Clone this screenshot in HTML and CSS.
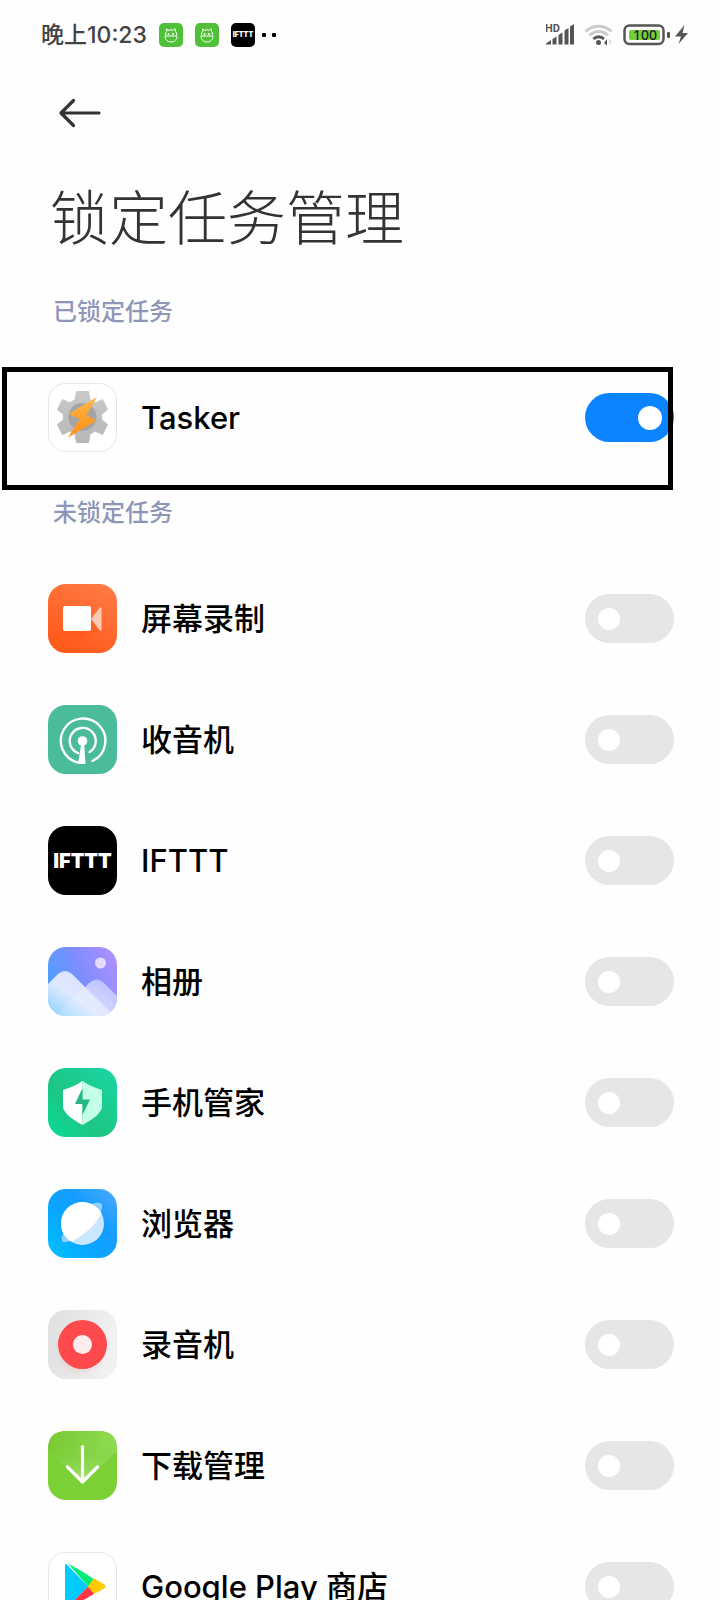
FILE: index.html
```html
<!DOCTYPE html>
<html lang="zh-CN">
<head>
<meta charset="utf-8">
<meta name="viewport" content="width=device-width, initial-scale=1">
<title>锁定任务管理</title>
<link rel="stylesheet" href="styles.css">
</head>
<body>
<div class="screen">
  <div class="status">
    <span class="clock">晚上10:23</span>
    <div class="notices">
      <svg class="notice" viewBox="0 0 24 24" aria-hidden="true"><rect width="24" height="24" rx="5" fill="#50c038"/><g fill="none" stroke="#fff" stroke-width="1"><path d="M7.500 8.500Q6 10 6.500 12M16.500 8.500Q18 10 17.500 12M8 8.500 7.500 6l2.500 1.500L12 6.500l2 1L16 5.500l.5 3M6 13h12c0 8-12 8-12 0z"/></g><circle cx="9.500" cy="11" r="1" fill="#fff"/><circle cx="14" cy="11" r="1" fill="#fff"/></svg>
      <svg class="notice" viewBox="0 0 24 24" aria-hidden="true"><rect width="24" height="24" rx="5" fill="#50c038"/><g fill="none" stroke="#fff" stroke-width="1"><path d="M7.500 8.500Q6 10 6.500 12M16.500 8.500Q18 10 17.500 12M8 8.500 7.500 6l2.500 1.500L12 6.500l2 1L16 5.500l.5 3M6 13h12c0 8-12 8-12 0z"/></g><circle cx="9.500" cy="11" r="1" fill="#fff"/><circle cx="14" cy="11" r="1" fill="#fff"/></svg>
      <span class="notice notice-ifttt">IFTTT</span>
    </div>
    <span class="more"><i></i><i></i></span>
    <div class="indicators">
      <svg width="30" height="24" viewBox="0 0 30 24" aria-hidden="true"><text class="hd" x="-1" y="9">HD</text><g fill="#555"><path d="M0 21.500v-1L5 17v4.500zM6.500 16l4-2.500v8H6.500zM12.500 12l4-2.500v12h-4zM18.500 7.500l4-2.500v16.500h-4zM24 3.500l4-2.500v20.500h-4z"/></g></svg>
      <svg width="30" height="24" viewBox="0 0 30 24" aria-hidden="true"><g fill="none" stroke-width="3"><path stroke="#ccc" d="M1.500 8.500a18.500 18.500 0 0 1 26 0M5.500 12.500a12.500 12.500 0 0 1 18.500 0"/><path stroke="#555" d="M9.500 16a7.500 7.500 0 0 1 10.500 0"/></g><circle cx="14.500" cy="19.500" r="2.500" fill="#555"/><path d="M20 20l3-4v6.500z" fill="#555"/><path d="M25 16v6l3-3.500z" fill="#ddd"/></svg>
      <div class="power">
        <svg width="48" height="24" viewBox="0 0 48 24" aria-hidden="true"><rect x="2.500" y="2.500" width="39" height="18.500" rx="5" fill="#fff" stroke="#555" stroke-width="2.500"/><rect x="7" y="7" width="31" height="10" rx="2" fill="#75d13b"/><rect x="45" y="9" width="3" height="6" rx="1" fill="#555"/><text class="charge" x="23" y="17" text-anchor="middle">100</text></svg>
        <svg width="16" height="24" viewBox="0 0 16 24" aria-hidden="true"><path d="M10.500 2 1 13.500h6L4.500 21 14 10H8.500z" fill="#555"/></svg>
      </div>
    </div>
  </div>
  <header class="head">
    <button class="back" type="button" aria-label="返回"><svg width="44" height="32" viewBox="0 0 44 32" fill="none" stroke="#333" stroke-width="3.200" stroke-linecap="round" stroke-linejoin="round"><path d="M41 16H4M15.500 3.500 3 16l12.500 12.500"/></svg></button>
    <h1 class="title">锁定任务管理</h1>
  </header>
  <main>
    <section>
      <h2 class="group">已锁定任务</h2>
      <label class="row row-marked">
        <svg class="icon" viewBox="0 0 69 69" aria-hidden="true"><defs><linearGradient id="tg" x2="0" y2="1"><stop stop-color="#c9c9c9"/><stop offset="1" stop-color="#b7b7b7"/></linearGradient><linearGradient id="tb" x2="0" y2="1"><stop stop-color="#ffb84d"/><stop offset="1" stop-color="#ff8c10"/></linearGradient></defs><rect x=".5" y=".5" width="68" height="68" rx="17" fill="#fff" stroke="#e6e6e6"/><path fill="url(#tg)" stroke="url(#tg)" stroke-width="1" stroke-linejoin="round" d="M28.500 8.500h12l1.500 8 5 3.500 7.500-3.500 5 10-6 5v5l6 5-5 10L47 48l-5 3-1.500 8.500h-12L27 51l-5-3-7.500 3.500-5-10 6-5v-5l-6-5 5-10L22 20l5-3.500z"/><circle cx="34.500" cy="34" r="14" fill="#a4a4a4"/><path fill="url(#tb)" d="M49 14 20.500 31 32 36 20 54.500 48.500 37.500 38.500 32.500z"/></svg>
        <span class="name">Tasker</span>
        <input class="switch" type="checkbox" checked>
      </label>
    </section>
    <section>
      <h2 class="group">未锁定任务</h2>
      <label class="row">
        <svg class="icon" viewBox="0 0 69 69" aria-hidden="true"><defs><linearGradient id="rc" x1="1" y1="0" x2=".5" y2="1"><stop stop-color="#ff7c48"/><stop offset="1" stop-color="#ff5c1c"/></linearGradient><radialGradient id="rs"><stop stop-color="#ff4a08"/><stop offset="1" stop-color="#ff5a1a" stop-opacity="0"/></radialGradient></defs><rect width="69" height="69" rx="18" fill="url(#rc)"/><ellipse cx="31" cy="44" rx="22" ry="13" fill="url(#rs)"/><path d="M43 35 51.500 24q2-2 2 1v20q0 3-2 1z" fill="#ffc9b4"/><rect x="15" y="22" width="28" height="25" rx="2" fill="#fff"/></svg>
        <span class="name">屏幕录制</span>
        <input class="switch" type="checkbox">
      </label>
      <label class="row">
        <svg class="icon" viewBox="0 0 69 69" aria-hidden="true"><rect width="69" height="69" rx="18" fill="#4abc9c"/><g fill="none" stroke="#fff" stroke-width="2.400" stroke-linecap="round"><path d="M30 57.500A22.300 22.300 0 1 1 44.500 56"/><path d="M30 48A13 13 0 1 1 41.500 47"/></g><circle cx="34.500" cy="36" r="4.800" fill="#fff"/><path d="M33.500 37h2.500l1.500 22H30z" fill="#fff"/></svg>
        <span class="name">收音机</span>
        <input class="switch" type="checkbox">
      </label>
      <label class="row">
        <span class="icon icon-ifttt" aria-hidden="true">IFTTT</span>
        <span class="name">IFTTT</span>
        <input class="switch" type="checkbox">
      </label>
      <label class="row">
        <svg class="icon" viewBox="0 0 69 69" aria-hidden="true"><defs><linearGradient id="ps" x1="0" y1=".6" x2="1" y2=".2"><stop stop-color="#4ca0ff"/><stop offset=".5" stop-color="#7e8dff"/><stop offset="1" stop-color="#ae8fff"/></linearGradient><linearGradient id="pm" x1="0" y1="1" x2=".7" y2=".3"><stop stop-color="#88d2ff"/><stop offset=".6" stop-color="#e0e9ff"/><stop offset="1" stop-color="#dce2ff"/></linearGradient><linearGradient id="pn" x1="0" y1="1" x2="1" y2="0"><stop stop-color="#e8f2ff"/><stop offset="1" stop-color="#b6baff"/></linearGradient><clipPath id="pc"><rect width="69" height="69" rx="18"/></clipPath></defs><g clip-path="url(#pc)"><path fill="url(#ps)" d="M0 0h69v69H0z"/><circle cx="52.500" cy="16" r="5.500" fill="#e6dcff"/><path fill="url(#pn)" d="M12 69 41 36q8-7 15 0l13 13v20z"/><path fill="url(#pm)" d="M0 37 10 27q7-6 14 0l39 39v3H0z"/><path d="M14 62 37 40 63 66v3H10z" fill="#fff" opacity=".15"/></g></svg>
        <span class="name">相册</span>
        <input class="switch" type="checkbox">
      </label>
      <label class="row">
        <svg class="icon" viewBox="0 0 69 69" aria-hidden="true"><defs><linearGradient id="sg" x1="0" y1="1" x2="1" y2="0"><stop stop-color="#06dc98"/><stop offset=".4" stop-color="#1ec583"/><stop offset="1" stop-color="#18d8a6"/></linearGradient></defs><rect width="69" height="69" rx="18" fill="url(#sg)"/><path d="M34.500 13q-8 5.500-19.500 9v17q1 8 19.500 18z" fill="#fff"/><path d="M34.500 13q8 5.500 19.500 9v17q-1 8-19.500 18z" fill="#c4ffe8"/><path d="M34.500 20 27 36h7.500v11L42 31.500h-7.500z" fill="#26b97e"/></svg>
        <span class="name">手机管家</span>
        <input class="switch" type="checkbox">
      </label>
      <label class="row">
        <svg class="icon" viewBox="0 0 69 69" aria-hidden="true"><defs><linearGradient id="bg" x1="0" y1="1" x2="1" y2="0"><stop stop-color="#00c4ff"/><stop offset=".4" stop-color="#0aa4ff"/><stop offset=".65" stop-color="#159dff"/><stop offset="1" stop-color="#51aaff"/></linearGradient><clipPath id="bc"><circle cx="34.500" cy="34.500" r="21.500"/></clipPath></defs><rect width="69" height="69" rx="18" fill="url(#bg)"/><path d="M43 15q10-3 11 1 1 5-5 13L24 51q-8 4-10 1-1-4 2-10z" fill="#8fd0ff"/><circle cx="34.500" cy="34.500" r="21.500" fill="#cbe7ff"/><path clip-path="url(#bc)" d="M0 0h60l-6 22q-4 12-16 21-9 7-15 10H0z" fill="#fff"/></svg>
        <span class="name">浏览器</span>
        <input class="switch" type="checkbox">
      </label>
      <label class="row">
        <svg class="icon" viewBox="0 0 69 69" aria-hidden="true"><defs><linearGradient id="vg" x2="1" y2=".2"><stop stop-color="#dfdfdf"/><stop offset="1" stop-color="#f1f1f1"/></linearGradient><radialGradient id="vs"><stop offset=".6" stop-color="#eab5b5"/><stop offset="1" stop-color="#e5dada" stop-opacity="0"/></radialGradient></defs><rect width="69" height="69" rx="18" fill="url(#vg)"/><circle cx="32" cy="40" r="27" fill="url(#vs)" opacity=".6"/><circle cx="34.500" cy="34.500" r="24.500" fill="#ff4a4d"/><circle cx="34.500" cy="34.500" r="9.500" fill="#ffecee"/></svg>
        <span class="name">录音机</span>
        <input class="switch" type="checkbox">
      </label>
      <label class="row">
        <svg class="icon" viewBox="0 0 69 69" aria-hidden="true"><defs><linearGradient id="dg" x2="1" y2="0"><stop stop-color="#7acb35"/><stop offset="1" stop-color="#8dda50"/></linearGradient><linearGradient id="df" x2="0" y2="1"><stop stop-color="#8ad648" stop-opacity="0"/><stop offset="1" stop-color="#a8e376"/></linearGradient></defs><rect width="69" height="69" rx="18" fill="#7bd035"/><path d="M0 20v-2Q0 0 18 0h33q18 0 18 18v2L35 52z" fill="url(#dg)"/><path d="M0 20h69L35 52z" fill="url(#df)"/><path d="M34.500 15.500V51M19.500 36l15 15 15-15" fill="none" stroke="#fff" stroke-width="3.200" stroke-linecap="round" stroke-linejoin="round"/></svg>
        <span class="name">下载管理</span>
        <input class="switch" type="checkbox">
      </label>
      <label class="row">
        <svg class="icon" viewBox="0 0 69 69" aria-hidden="true"><defs><clipPath id="gc"><path d="M17 14q0-4 4-2l35 20q3 2.500 0 5L21 57q-4 2-4-2z"/></clipPath></defs><rect x=".5" y=".5" width="68" height="68" rx="17" fill="#fff" stroke="#e6e6e6"/><g clip-path="url(#gc)"><path fill="#00ec76" d="M17 8h2l28 20-7 6.500z"/><path fill="#00cbff" d="M17 10.500 40 34.500 17 58z"/><path fill="#ffca00" d="M46 26 60 34.500 46 42l-6-7.500z"/><path fill="#ff3548" d="M40 34.500 46 42 17 59v-1z"/></g></svg>
        <span class="name">Google Play 商店</span>
        <input class="switch" type="checkbox">
      </label>
    </section>
  </main>
</div>
</body>
</html>
```
FILE: styles.css
```css
* {
  box-sizing: border-box;
}

body {
  margin: 0;
  background: #fefefe;
  color: #000;
  font-family: Inter, "Noto Sans CJK SC", sans-serif;
}

.screen {
  height: 100vh;
  overflow: hidden;
}

.status {
  display: flex;
  align-items: center;
  height: 69px;
  padding: 0 30px 0 41px;
}

.clock {
  color: #444;
  font-size: 23px;
  font-weight: 500;
  line-height: 32px;
}

.notices {
  display: flex;
  gap: 12px;
  margin-left: 12px;
}

.notice {
  width: 24px;
  height: 24px;
}

.notice-ifttt {
  display: flex;
  align-items: center;
  justify-content: center;
  border-radius: 5px;
  background: #000;
  color: #fff;
  font-size: 7px;
  font-weight: 900;
}

.more {
  display: flex;
  gap: 6px;
  margin-left: 7px;
}

.more i {
  width: 4px;
  height: 4px;
  border-radius: 1px;
  background: #000;
}

.indicators {
  display: flex;
  gap: 8px;
  margin-left: auto;
}

.power {
  display: flex;
  gap: 4px;
}

.hd {
  fill: #555;
  font-family: Roboto, sans-serif;
  font-size: 11px;
  font-weight: 700;
}

.charge {
  fill: #222;
  font-family: "Noto Sans", sans-serif;
  font-size: 14px;
  font-weight: 500;
}

.head {
  height: 208px;
  padding: 28px 50px 0;
}

.back {
  display: block;
  height: 32px;
  margin-left: 8px;
  padding: 0;
  border: 0;
  background: none;
}

.title {
  margin: 46px 0 0;
  color: #333;
  font-family: "Noto Sans CJK SC", sans-serif;
  font-size: 59px;
  font-weight: 300;
  line-height: 80px;
}

.group {
  display: flex;
  align-items: center;
  height: 80px;
  margin: 0;
  padding: 0 53px 16px;
  color: #8e96b8;
  font-size: 24px;
  font-weight: 500;
}

.row {
  position: relative;
  display: flex;
  align-items: center;
  gap: 24px;
  height: 121px;
  padding: 0 46px 0 48px;
}

.row-marked::after {
  content: "";
  position: absolute;
  inset: 10px 47px -12px 2px;
  border: 5px solid #000;
}

.icon {
  flex: none;
  width: 69px;
  height: 69px;
}

.icon-ifttt {
  display: flex;
  align-items: center;
  justify-content: center;
  border-radius: 18px;
  background: #000;
  color: #fff;
  font-size: 20px;
  font-weight: 900;
}

.name {
  flex: 1;
  font-size: 31px;
  font-weight: 500;
  line-height: 48px;
}

.switch {
  appearance: none;
  display: flex;
  align-items: center;
  width: 89px;
  height: 49px;
  margin: 0;
  padding: 0 13px;
  border-radius: 25px;
  background: #e6e6e6;
}

.switch::before {
  content: "";
  width: 22px;
  height: 22px;
  border-radius: 50%;
  background: #fff;
}

.switch:checked {
  justify-content: flex-end;
  padding: 0 12px;
  background: #0d84ff;
}

.switch:checked::before {
  width: 24px;
  height: 24px;
}
```
